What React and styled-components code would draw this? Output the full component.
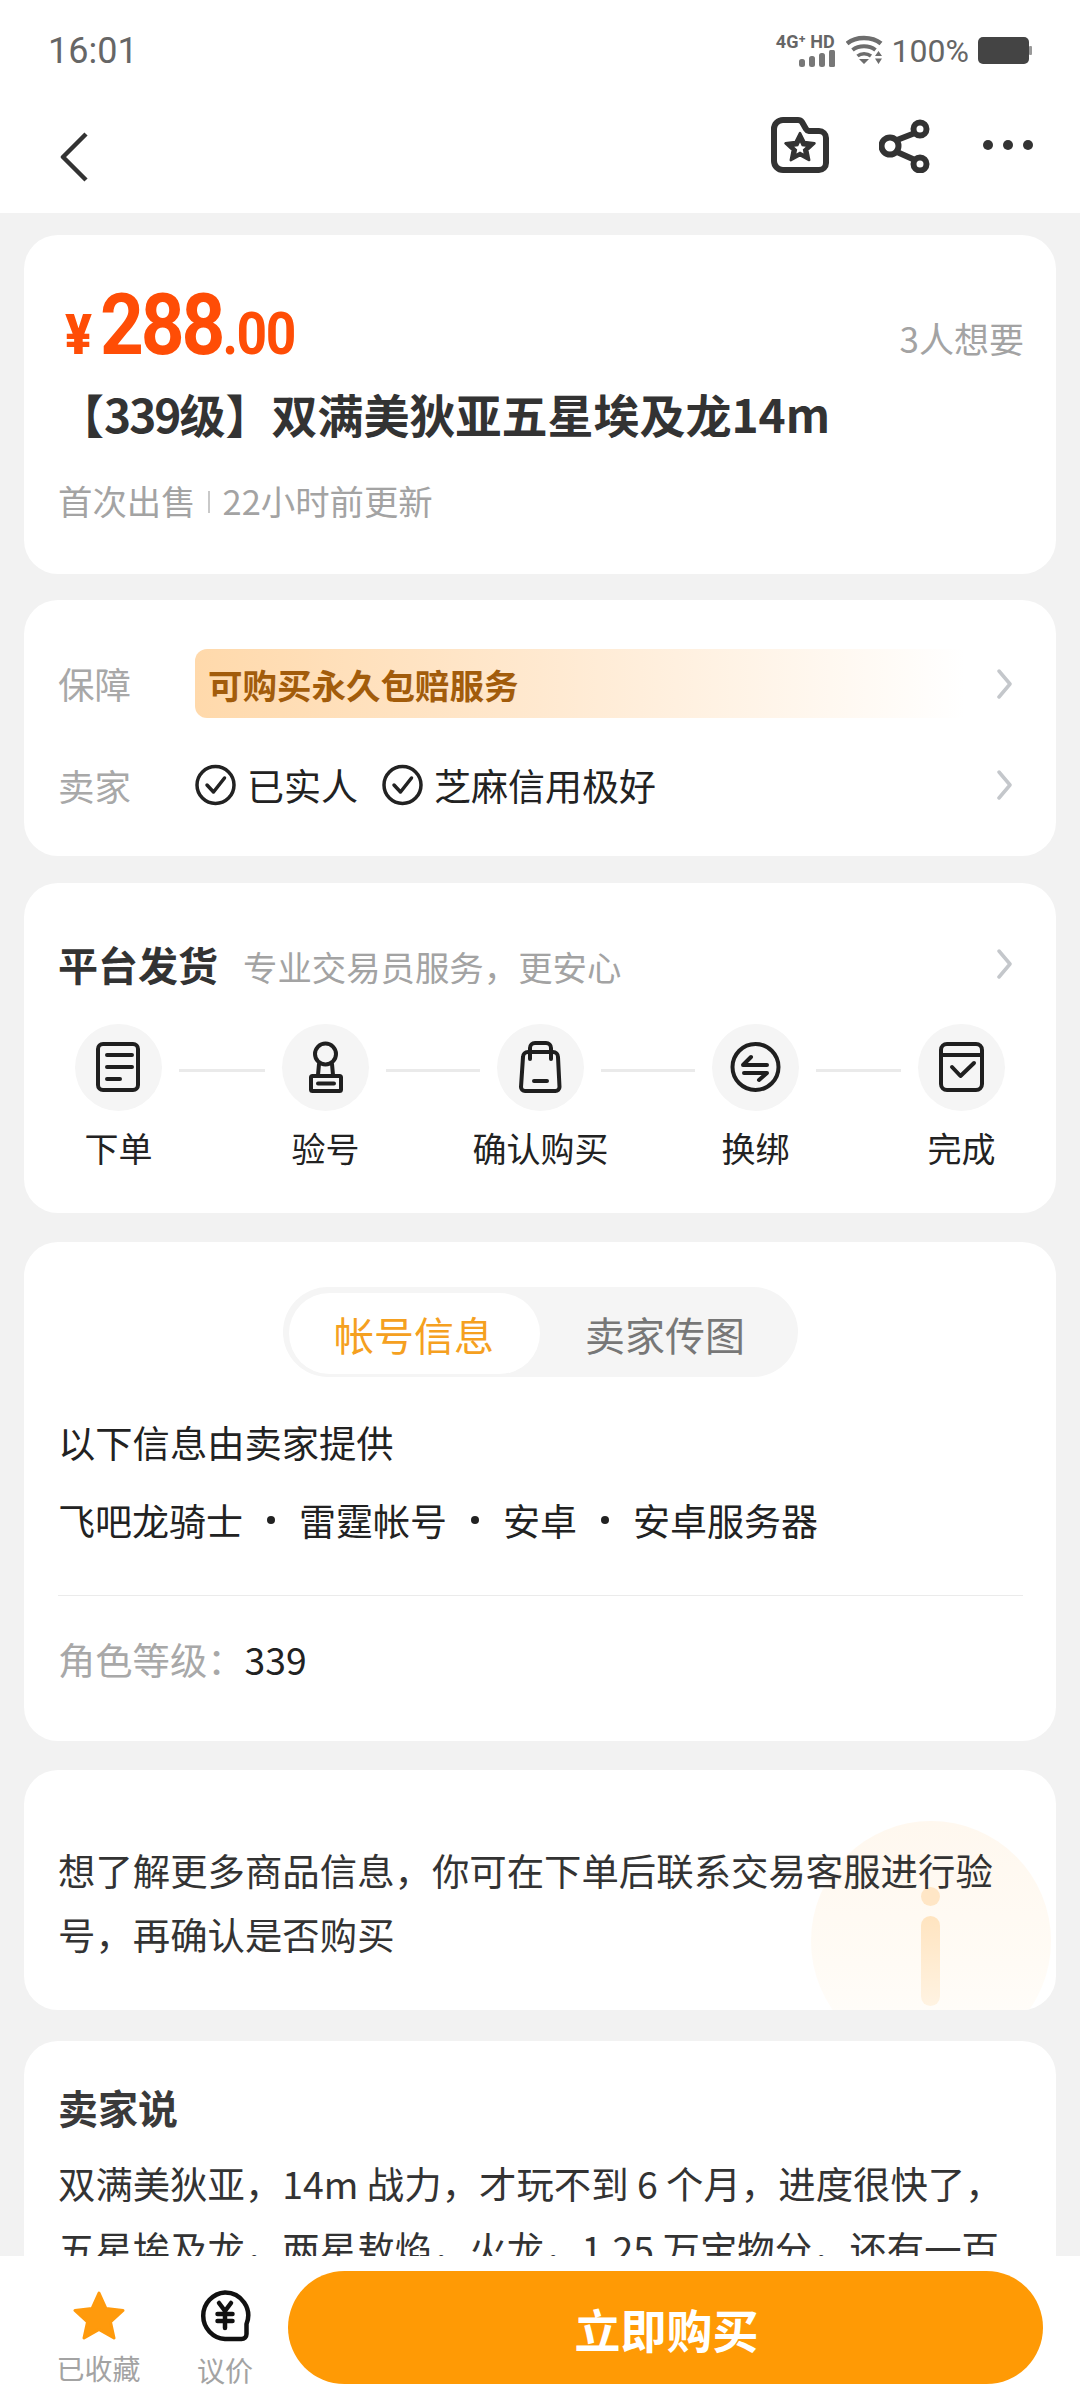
import { Fragment } from "react";
import styled, { createGlobalStyle } from "styled-components";

const GlobalStyle = createGlobalStyle`
  * { box-sizing: border-box; }
  html, body { margin: 0; padding: 0; background: #f2f2f2; }
  body { font-family: "Noto Sans CJK SC", "Noto Sans", sans-serif; }
`;

const Screen = styled.div`
  width: 1080px;
  height: 2400px;
  display: flex;
  flex-direction: column;
  overflow: hidden;
  background: #f2f2f2;
`;

const TopArea = styled.div`
  height: 213px;
  flex-shrink: 0;
  background: #fff;
`;

const StatusBar = styled.div`
  height: 100px;
  padding: 0 48px;
  display: flex;
  align-items: center;
  justify-content: space-between;
  color: #666;
  font-family: Roboto, sans-serif;
`;

const Clock = styled.span`
  font-size: 36px;
  margin-top: 2px;
`;

const StatusRight = styled.div`
  display: flex;
  align-items: center;
`;

const NetBlock = styled.div`
  width: 58px;
  display: flex;
  flex-direction: column;
  align-items: flex-end;
  margin-right: 11px;
`;

const NetLabel = styled.span`
  font-size: 18px;
  line-height: 17px;
  font-weight: 700;
  white-space: nowrap;
`;

const Percent = styled.span`
  font-size: 32px;
  margin: 2px 9px 0 8px;
`;

const NavBar = styled.div`
  height: 113px;
  padding: 0 47px 0 60px;
  display: flex;
  align-items: flex-start;
  justify-content: space-between;
`;

const BackIcon = styled.svg`
  width: 28px;
  height: 50px;
  margin-top: 32px;
`;

const NavActions = styled.div`
  display: flex;
  align-items: flex-start;
  padding-top: 13px;
`;

const NavIcon = styled.svg`
  flex-shrink: 0;
  margin-left: ${(p) => p.$left || 0}px;
  margin-top: ${(p) => p.$top || 0}px;
`;

const Content = styled.div`
  flex: 1;
  min-height: 0;
  overflow: hidden;
  padding: 22px 24px 0;
  display: flex;
  flex-direction: column;
`;

const Card = styled.section`
  position: relative;
  flex-shrink: 0;
  background: #fff;
  border-radius: 34px;
  overflow: hidden;
  height: ${(p) => p.$height}px;
  margin-bottom: ${(p) => p.$gap ?? 27}px;
  padding: ${(p) => p.$padding};
`;

const PriceRow = styled.div`
  display: flex;
  align-items: flex-end;
  justify-content: space-between;
  height: 108px;
  padding: 0 8px 0 7px;
`;

const Price = styled.div`
  display: flex;
  align-items: baseline;
  color: #ff4d06;
  font-family: Roboto, sans-serif;
  font-weight: 700;
  line-height: 88px;
  transform: scaleX(0.89);
  transform-origin: left center;
`;

const Currency = styled.span`
  font-size: 56px;
  margin-right: 9px;
  font-weight: 900;
`;

const Whole = styled.span`
  font-size: 86px;
  letter-spacing: -3.5px;
`;

const Fraction = styled.span`
  font-size: 60px;
  letter-spacing: -1.5px;
`;

const Wanted = styled.span`
  font-size: 35px;
  line-height: 44px;
  color: #a3a3a3;
  margin-bottom: 19px;
`;

const Title = styled.h1`
  margin: 4px 0 0;
  font-size: 46px;
  line-height: 60px;
  font-weight: 700;
  color: #333;
  white-space: nowrap;
`;

const TitleDigits = styled.span`
  letter-spacing: -2px;
`;

const Meta = styled.div`
  margin-top: 34px;
  display: flex;
  align-items: center;
  font-size: 34.4px;
  line-height: 46px;
  color: #a3a3a3;
`;

const MetaBar = styled.i`
  width: 2px;
  height: 22px;
  margin: 4px 13px 0 12px;
  background: #c9c9c9;
`;

const InfoRow = styled.div`
  height: ${(p) => p.$height}px;
  margin-top: ${(p) => p.$top || 0}px;
  display: flex;
  align-items: center;
`;

const RowLabel = styled.span`
  width: 137px;
  flex-shrink: 0;
  font-size: 36.5px;
  color: #a8a8a8;
`;

const Guarantee = styled.div`
  width: 770px;
  height: 69px;
  padding-left: 13px;
  display: flex;
  align-items: center;
  border-radius: 12px 0 0 12px;
  background: linear-gradient(90deg, #ffd9ab 0%, #ffe9d0 45%, #fff 100%);
  color: #a25c0b;
  font-size: 34.5px;
  font-weight: 700;
`;

const Badges = styled.div`
  flex: 1;
  display: flex;
  align-items: center;
  font-size: 37px;
  color: #222;
`;

const Badge = styled.span`
  display: flex;
  align-items: center;
  gap: 11px;
  margin-right: 24px;
`;

const Chevron = styled.svg`
  width: 18px;
  height: 30px;
  flex-shrink: 0;
  margin-left: auto;
  margin-right: 8px;
`;

const ServiceHead = styled.div`
  display: flex;
  align-items: center;
  height: 54px;
`;

const ServiceTitle = styled.h2`
  margin: 0;
  font-size: 40px;
  line-height: 54px;
  font-weight: 700;
  color: #333;
`;

const ServiceNote = styled.span`
  margin-left: 25px;
  margin-top: 4px;
  font-size: 34.4px;
  color: #a3a3a3;
`;

const StepRow = styled.div`
  margin-top: 33px;
  margin-left: 17px;
  display: flex;
  align-items: flex-start;
  gap: 17px;
`;

const Step = styled.div`
  width: 87px;
  flex-shrink: 0;
  display: flex;
  flex-direction: column;
  align-items: center;
`;

const StepCircle = styled.div`
  width: 87px;
  height: 87px;
  border-radius: 50%;
  background: #f5f5f5;
`;

const StepLabel = styled.span`
  margin-top: 13px;
  font-size: 34px;
  line-height: 48px;
  white-space: nowrap;
  color: #222;
`;

const StepLine = styled.i`
  width: ${(p) => p.$width}px;
  height: 3px;
  margin-top: 45px;
  flex-shrink: 0;
  background: #eaeaea;
`;

const TabsWrap = styled.div`
  display: flex;
  justify-content: center;
`;

const Tabs = styled.div`
  width: 515px;
  height: 90px;
  padding: 6px 0 3px 6px;
  display: flex;
  background: #f5f5f5;
  border-radius: 45px;
  margin-left: -1px;
`;

const Tab = styled.div`
  width: 251px;
  display: flex;
  align-items: center;
  justify-content: center;
  border-radius: 41px;
  font-size: 40px;
  background: ${(p) => (p.$active ? "#fff" : "transparent")};
  color: ${(p) => (p.$active ? "#f5a020" : "#777")};
`;

const BodyLine = styled.div`
  font-size: 37.3px;
  line-height: 50px;
  color: #222;
  white-space: nowrap;
`;

const Provided = styled(BodyLine)`
  margin-top: 40px;
`;

const Tags = styled.div`
  margin-top: 28px;
  display: flex;
  align-items: center;
  font-size: 37px;
  line-height: 50px;
  color: #222;
`;

const TagDot = styled.i`
  width: 56px;
  display: flex;
  justify-content: center;

  &::before {
    content: "";
    width: 8px;
    height: 8px;
    border-radius: 50%;
    background: #222;
  }
`;

const Divider = styled.div`
  height: 1px;
  margin-top: 50px;
  background: #ebebeb;
`;

const AttrRow = styled(BodyLine)`
  margin-top: 38px;
`;

const AttrName = styled.span`
  color: #a8a8a8;
`;

const Notice = styled.p`
  position: relative;
  z-index: 1;
  margin: 0;
  font-size: 37.4px;
  line-height: 64px;
  color: #333;
`;

const InfoMark = styled.div`
  position: absolute;
  left: 787px;
  top: 51px;
  width: 240px;
  height: 240px;
  border-radius: 50%;
  background: linear-gradient(180deg, #fff8ef 0%, #fffbf5 60%, #fffefc 100%);

  &::before {
    content: "";
    position: absolute;
    left: 110px;
    top: 66px;
    width: 19px;
    height: 19px;
    border-radius: 50%;
    background: #ffe6c6;
  }

  &::after {
    content: "";
    position: absolute;
    left: 110px;
    top: 95px;
    width: 19px;
    height: 90px;
    border-radius: 10px;
    background: linear-gradient(180deg, #ffe4c0, #fff3e2);
  }
`;

const SellerTitle = styled.h2`
  margin: 0;
  font-size: 40px;
  line-height: 54px;
  font-weight: 700;
  color: #3a3a3a;
`;

const SellerText = styled.p`
  margin: 17px 0 0;
  font-size: 37.4px;
  line-height: 65px;
  color: #333;
  white-space: nowrap;
`;

const BottomBar = styled.div`
  height: 144px;
  flex-shrink: 0;
  position: relative;
  z-index: 2;
  background: #fff;
  display: flex;
  align-items: flex-start;
  padding-left: 57px;
`;

const BarAction = styled.div`
  width: ${(p) => p.$width}px;
  margin-left: ${(p) => p.$left || 0}px;
  padding-top: 34px;
  display: flex;
  flex-direction: column;
  align-items: center;
  flex-shrink: 0;
`;

const BarLabel = styled.span`
  margin-top: 9px;
  font-size: 28px;
  line-height: 38px;
  color: #a3a3a3;
  white-space: nowrap;
`;

const BuyButton = styled.div`
  width: 755px;
  height: 113px;
  margin: 15px 0 0 7px;
  border-radius: 57px;
  background: #ff9a05;
  color: #fff;
  display: flex;
  align-items: center;
  justify-content: center;
  font-size: 46px;
  font-weight: 700;
  padding-left: 2px;
`;

const ChevronIcon = () => (
  <Chevron viewBox="0 0 18 30" fill="none">
    <path d="M3 2l11 13L3 28" stroke="#c4c7cb" strokeWidth="3.5" strokeLinecap="round" strokeLinejoin="round" />
  </Chevron>
);

const CheckCircle = () => (
  <svg width="41" height="42" viewBox="0 0 41 42" fill="none">
    <circle cx="20.5" cy="21" r="18.5" stroke="#222" strokeWidth="3.5" />
    <path d="M12 21l6.5 7L29.5 14" stroke="#222" strokeWidth="3.5" strokeLinecap="round" strokeLinejoin="round" />
  </svg>
);

const stepIcons = {
  order: (
    <>
      <rect x="23" y="20" width="40" height="46" rx="5" />
      <path d="M32 31h25M32 43h25M32 55h13" />
    </>
  ),
  stamp: (
    <>
      <circle cx="43.5" cy="30" r="10.5" />
      <path d="M37 40l-1 11M50 40l1 11" />
      <rect x="29" y="52" width="30" height="15" rx="1.5" />
      <path d="M36 59.5h16" />
    </>
  ),
  bag: (
    <>
      <path d="M31 28h25a5 5 0 0 1 5 5l1.500 30a4 4 0 0 1-4 4H28a4 4 0 0 1-4-4l2-30a5 5 0 0 1 5-5z" />
      <path d="M33 35V24a5 5 0 0 1 5-5h11a5 5 0 0 1 5 5v11M37 57h13" />
    </>
  ),
  swap: (
    <>
      <circle cx="43.5" cy="43" r="23" />
      <path d="M55 41H31l8-8M32 49h23l-8 7" />
    </>
  ),
  done: (
    <>
      <rect x="23" y="20" width="41" height="46" rx="6" />
      <path d="M23 31h41M34 43l8.500 9L56 39" />
    </>
  ),
};

const StepIcon = ({ name }) => (
  <StepCircle>
    <svg width="87" height="87" viewBox="0 0 87 87" fill="none" stroke="#1f1f1f" strokeWidth="4" strokeLinecap="round" strokeLinejoin="round">
      {stepIcons[name]}
    </svg>
  </StepCircle>
);

const steps = [
  { name: "order", label: "下单" },
  { name: "stamp", label: "验号", line: 86 },
  { name: "bag", label: "确认购买", line: 94 },
  { name: "swap", label: "换绑", line: 94 },
  { name: "done", label: "完成", line: 85 },
];

const SignalIcon = () => (
  <svg width="36" height="17" viewBox="0 0 36 17" fill="#777">
    <rect x="0" y="9" width="6" height="8" rx="2.500" />
    <rect x="10" y="6" width="6" height="11" rx="2.500" />
    <rect x="20" y="3" width="6" height="14" rx="2.500" />
    <rect x="30" y="0" width="6" height="17" rx="1.500" />
  </svg>
);

const WifiIcon = () => (
  <svg width="38" height="30" viewBox="0 0 38 30" fill="none">
    <path d="M1 8.500C10 1 26 1 35 8.500" stroke="#6d6d6d" strokeWidth="4.500" />
    <path d="M6.500 15C13 10 23 10 29.500 15" stroke="#6d6d6d" strokeWidth="4" />
    <path d="M11.500 21C15 18 21 18 25 21" stroke="#6d6d6d" strokeWidth="3.500" />
    <path d="M18 29l-5-5h10zM29 21l3.500-5 3.500 5zM29 23.500h7L32.500 29z" fill="#6d6d6d" />
  </svg>
);

const BatteryIcon = () => (
  <svg width="54" height="27" viewBox="0 0 54 27">
    <rect x="0" y="0" width="51" height="27" rx="5" fill="#444" />
    <rect x="51" y="9" width="3" height="9" rx="1" fill="#999" />
  </svg>
);

const FolderStar = () => (
  <NavIcon width="58" height="56" viewBox="0 0 58 56" fill="none" $top={4}>
    <path
      d="M3 12a9 9 0 0 1 9-9h15a5 5 0 0 1 4 2l4 7a4 4 0 0 0 3 2h10a7 7 0 0 1 7 7v25a7 7 0 0 1-7 7H12a9 9 0 0 1-9-9z"
      stroke="#333"
      strokeWidth="6"
      strokeLinejoin="round"
    />
    <path
      d="M29 16l4.500 9 10 1.300-7.300 6.800 2 10-9.200-5-9.200 5 2-10-7.300-6.800 10-1.300z"
      fill="#333"
      stroke="#333"
      strokeWidth="2.500"
      strokeLinejoin="round"
    />
    <path d="M29 25.500l1.800 3.700 4 .5-3 2.800.8 4-3.600-2-3.600 2 .8-4-3-2.800 4-.5z" fill="#fff" />
  </NavIcon>
);

const ShareIcon = () => (
  <NavIcon width="52" height="54" viewBox="0 0 52 54" fill="none" stroke="#333" strokeWidth="6" $left={50} $top={6}>
    <circle cx="11" cy="27" r="8.500" />
    <circle cx="41" cy="10" r="6.500" />
    <circle cx="41" cy="45" r="6.500" />
    <path d="M18 21l18-7M18 33l18 8" />
  </NavIcon>
);

const MoreIcon = () => (
  <NavIcon width="50" height="10" viewBox="0 0 50 10" fill="#333" $left={52} $top={27}>
    <circle cx="5" cy="5" r="5" />
    <circle cx="25" cy="5" r="5" />
    <circle cx="45" cy="5" r="5" />
  </NavIcon>
);

const StarIcon = () => (
  <svg width="52" height="50" viewBox="0 0 52 50" fill="#ff9a0c" stroke="#ff9a0c" strokeWidth="3" strokeLinejoin="round">
    <path d="M26 3l7 15.500 17 2-12.500 11.500L41 48 26 39.500 11 48l3.500-16L2 20.500l17-2z" />
  </svg>
);

const BargainIcon = () => (
  <svg width="52" height="52" viewBox="0 0 52 52" fill="none" stroke="#111" strokeLinecap="round" strokeLinejoin="round">
    <path d="M26 2.500A23 23 0 0 1 47.500 34v10a5 5 0 0 1-5 5H26A23.300 23.300 0 0 1 26 2.500z" strokeWidth="4.500" />
    <path d="M20 13l6 8 6-8M18.500 24h15M18.500 31h15M26 21v17" strokeWidth="4.500" />
  </svg>
);

export default function App() {
  return (
    <Screen>
      <GlobalStyle />
      <TopArea>
        <StatusBar>
          <Clock>16:01</Clock>
          <StatusRight>
            <NetBlock>
              <NetLabel>4G⁺ HD</NetLabel>
              <SignalIcon />
            </NetBlock>
            <WifiIcon />
            <Percent>100%</Percent>
            <BatteryIcon />
          </StatusRight>
        </StatusBar>
        <NavBar>
          <BackIcon viewBox="0 0 28 50" fill="none">
            <path d="M26 2L3 25l23 23" stroke="#333" strokeWidth="4.500" strokeLinejoin="round" />
          </BackIcon>
          <NavActions>
            <FolderStar />
            <ShareIcon />
            <MoreIcon />
          </NavActions>
        </NavBar>
      </TopArea>

      <Content>
        <Card $height={339} $gap={26} $padding="36px 24px 0 34px">
          <PriceRow>
            <Price>
              <Currency>¥</Currency>
              <Whole>288</Whole>
              <Fraction>.00</Fraction>
            </Price>
            <Wanted>3人想要</Wanted>
          </PriceRow>
          <Title>
            【<TitleDigits>339</TitleDigits>级】双满美狄亚五星埃及龙14m
          </Title>
          <Meta>
            首次出售<MetaBar />22小时前更新
          </Meta>
        </Card>

        <Card $height={256} $gap={27} $padding="49px 34px 0">
          <InfoRow $height={69}>
            <RowLabel>保障</RowLabel>
            <Guarantee>可购买永久包赔服务</Guarantee>
            <ChevronIcon />
          </InfoRow>
          <InfoRow $height={42} $top={46}>
            <RowLabel>卖家</RowLabel>
            <Badges>
              <Badge>
                <CheckCircle />
                已实人
              </Badge>
              <Badge>
                <CheckCircle />
                芝麻信用极好
              </Badge>
            </Badges>
            <ChevronIcon />
          </InfoRow>
        </Card>

        <Card $height={330} $gap={29} $padding="54px 34px 0">
          <ServiceHead>
            <ServiceTitle>平台发货</ServiceTitle>
            <ServiceNote>专业交易员服务，更安心</ServiceNote>
            <ChevronIcon />
          </ServiceHead>
          <StepRow>
            {steps.map((step) => (
              <Fragment key={step.name}>
                {step.line && <StepLine $width={step.line} />}
                <Step>
                  <StepIcon name={step.name} />
                  <StepLabel>{step.label}</StepLabel>
                </Step>
              </Fragment>
            ))}
          </StepRow>
        </Card>

        <Card $height={499} $gap={29} $padding="45px 33px 0 34px">
          <TabsWrap>
            <Tabs>
              <Tab $active>帐号信息</Tab>
              <Tab>卖家传图</Tab>
            </Tabs>
          </TabsWrap>
          <Provided>以下信息由卖家提供</Provided>
          <Tags>
            飞吧龙骑士
            <TagDot />
            雷霆帐号
            <TagDot />
            安卓
            <TagDot />
            安卓服务器
          </Tags>
          <Divider />
          <AttrRow>
            <AttrName>角色等级：</AttrName>339
          </AttrRow>
        </Card>

        <Card $height={240} $gap={31} $padding="68px 34px 0">
          <InfoMark />
          <Notice>想了解更多商品信息，你可在下单后联系交易客服进行验号，再确认是否购买</Notice>
        </Card>

        <Card $height={300} $gap={0} $padding="39px 34px 0">
          <SellerTitle>卖家说</SellerTitle>
          <SellerText>
            双满美狄亚，14m 战力，才玩不到 6 个月，进度很快了，
            <br />
            五星埃及龙，两星敖焰，火龙，1.25 万宝物分，还有一百
          </SellerText>
        </Card>
      </Content>

      <BottomBar>
        <BarAction $width={83}>
          <StarIcon />
          <BarLabel>已收藏</BarLabel>
        </BarAction>
        <BarAction $width={112} $left={29}>
          <BargainIcon />
          <BarLabel>议价</BarLabel>
        </BarAction>
        <BuyButton>立即购买</BuyButton>
      </BottomBar>
    </Screen>
  );
}
